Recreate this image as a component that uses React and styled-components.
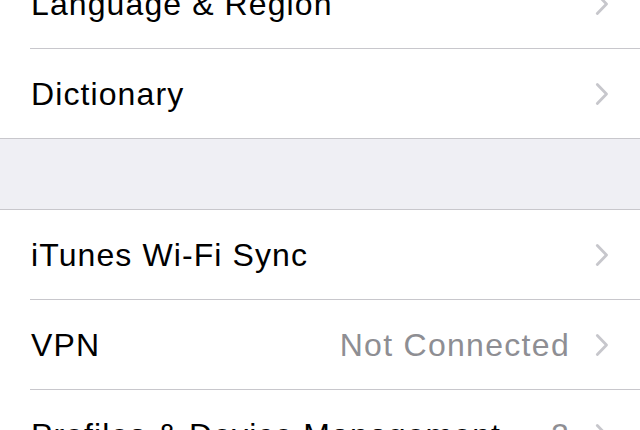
import React from "react";
import styled, { createGlobalStyle } from "styled-components";

const GlobalStyle = createGlobalStyle`
  html, body {
    margin: 0;
    padding: 0;
    background: #efeff4;
    overflow: hidden;
  }
  body {
    font-family: "Liberation Sans", Arial, sans-serif;
    -webkit-font-smoothing: antialiased;
  }
`;

const sections = [
  [
    { label: "Language & Region" },
    { label: "Dictionary" },
  ],
  [
    { label: "iTunes Wi-Fi Sync" },
    { label: "VPN", value: "Not Connected" },
    { label: "Profiles & Device Management", value: "2" },
  ],
];

const Chevron = () => (
  <svg width="14" height="24" viewBox="0 0 14 24" fill="none">
    <path
      d="M2.3 2.5 L11.5 12 L2.3 21.5"
      stroke="#c7c7cc"
      strokeWidth="2.8"
      strokeLinecap="round"
      strokeLinejoin="round"
    />
  </svg>
);

const SettingsRow = ({ label, value, last }) => (
  <Row>
    <RowInner $last={last}>
      <Label>{label}</Label>
      {value && <Value>{value}</Value>}
      <Chevron />
    </RowInner>
  </Row>
);

const App = () => {
  return (
    <>
      <GlobalStyle />
      <Page>
        {sections.map((rows, i) => (
          <React.Fragment key={i}>
            {i > 0 && <Gap />}
            <Group $first={i === 0}>
              {rows.map((r, j) => (
                <SettingsRow key={r.label} {...r} last={j === rows.length - 1} />
              ))}
            </Group>
          </React.Fragment>
        ))}
      </Page>
    </>
  );
};

export default App;

const Page = styled.div`
  width: 640px;
  height: 430px;
  overflow: hidden;
  background: #efeff4;
`;

const Group = styled.div`
  background: #ffffff;
  border-top: ${(p) => (p.$first ? "none" : "1px solid #c8c7cc")};
  border-bottom: 1px solid #c8c7cc;
  margin-top: ${(p) => (p.$first ? "-41px" : "0")};
`;

const Gap = styled.div`
  height: 70px;
`;

const Row = styled.div`
  padding-left: 30px;
`;

const RowInner = styled.div`
  height: 89px;
  display: flex;
  align-items: center;
  padding-right: 31px;
  border-bottom: ${(p) => (p.$last ? "none" : "1px solid #c8c7cc")};
  gap: 25px;
`;

const Label = styled.div`
  flex: 1;
  font-size: 32px;
  color: #000;
  letter-spacing: 1.1px;
  white-space: nowrap;
  padding-left: 1px;
  padding-top: 1px;
`;

const Value = styled.div`
  font-size: 32px;
  color: #8e8e93;
  letter-spacing: 1.3px;
  white-space: nowrap;
  padding-top: 1px;
`;
